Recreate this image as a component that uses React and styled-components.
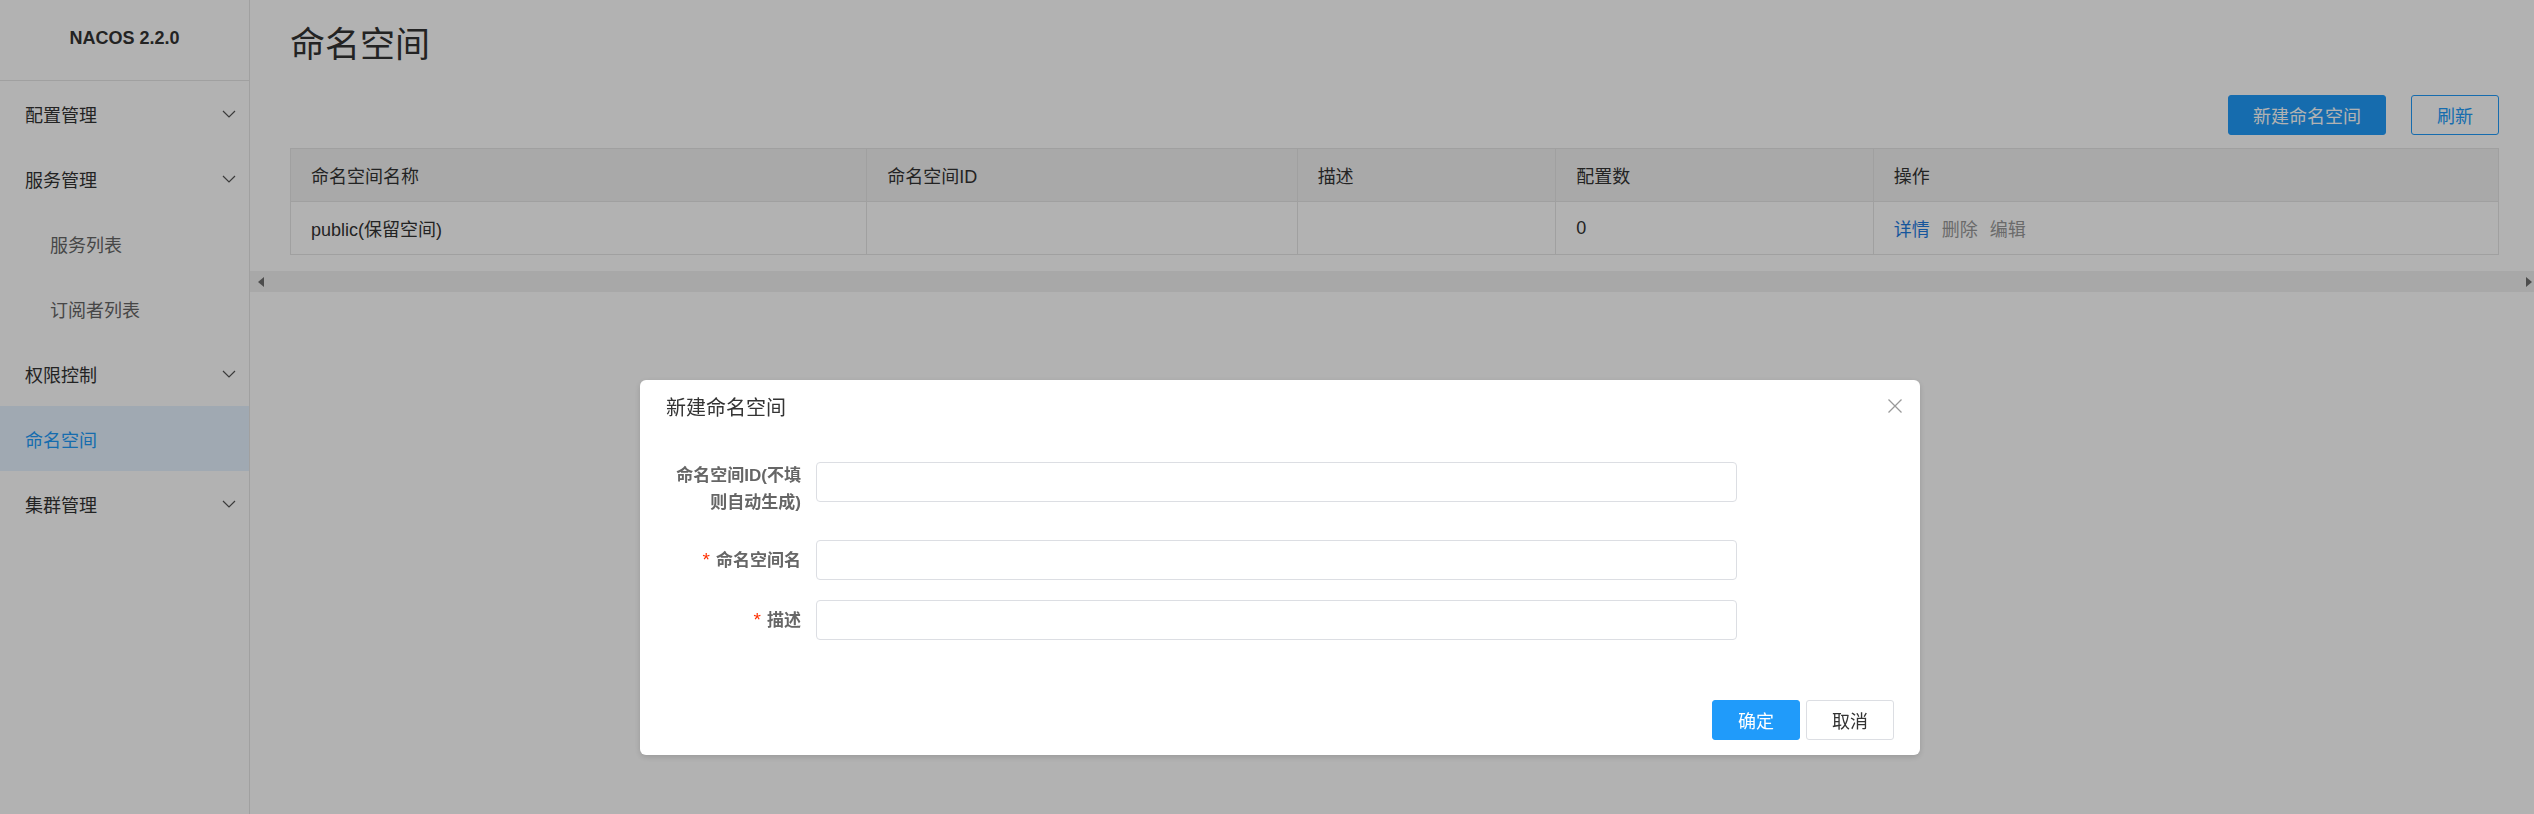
import React from 'react'
import styled, { createGlobalStyle } from 'styled-components'

const GlobalStyle = createGlobalStyle`
    html, body {
        margin: 0;
        padding: 0;
        background: #fff;
        font-family: "Liberation Sans", "Noto Sans CJK SC", sans-serif;
        color: #333;
    }
    * {
        box-sizing: border-box;
    }
`

const Page = styled.div`
    display: flex;
    width: 100vw;
    height: 100vh;
    overflow: hidden;
`

const Sidebar = styled.aside`
    width: 250px;
    flex-shrink: 0;
    border-right: 1px solid #e6e6e6;
    display: flex;
    flex-direction: column;
`

const Brand = styled.div`
    height: 81px;
    border-bottom: 1px solid #e6e6e6;
    display: flex;
    align-items: center;
    justify-content: center;
    padding-bottom: 4px;
    font-size: 18px;
    font-weight: bold;
    color: #333;
`

const MenuItem = styled.div`
    height: 65px;
    display: flex;
    align-items: center;
    justify-content: space-between;
    padding: 0 13px 0 ${p => (p.$sub ? 50 : 25)}px;
    font-size: 18px;
    color: ${p => (p.$active ? '#209bfa' : p.$sub ? '#666' : '#333')};
    background: ${p => (p.$active ? '#e5f3ff' : 'transparent')};
`

const Chevron = () => (
    <svg width="14" height="8" viewBox="0 0 14 8">
        <polyline points="1,1 7,7 13,1" fill="none" stroke="#555" strokeWidth="1.2" />
    </svg>
)

const Main = styled.main`
    flex: 1;
    display: flex;
    flex-direction: column;
    min-width: 0;
`

const Content = styled.div`
    padding: 0 35px 0 40px;
`

const Title = styled.h1`
    margin: 24px 0 0;
    font-size: 35px;
    font-weight: normal;
    line-height: 42px;
    color: #333;
`

const Toolbar = styled.div`
    display: flex;
    justify-content: flex-end;
    gap: 25px;
    margin-top: 29px;
`

const Button = styled.button`
    height: 40px;
    padding: 0 ${p => (p.$pad || 24)}px;
    border-radius: 3px;
    font-family: inherit;
    font-size: 18px;
    border: 1px solid ${p => (p.$primary ? '#209bfa' : p.$outline ? '#209bfa' : '#dcdee3')};
    background: ${p => (p.$primary ? '#209bfa' : '#fff')};
    color: ${p => (p.$primary ? '#fff' : p.$outline ? '#209bfa' : '#333')};
`

const Table = styled.div`
    margin-top: 13px;
    display: grid;
    grid-template-columns: 576fr 431fr 259fr 318fr 626fr;
    border: 1px solid #e6e6e6;
`

const HeadCell = styled.div`
    height: 53px;
    display: flex;
    align-items: center;
    padding: 0 20px;
    background: #f3f3f3;
    border-bottom: 1px solid #e6e6e6;
    border-left: ${p => (p.$first ? 'none' : '1px solid #e6e6e6')};
    font-size: 18px;
    color: #333;
`

const Cell = styled.div`
    height: 52px;
    display: flex;
    align-items: center;
    gap: 12px;
    padding: 0 20px;
    border-left: ${p => (p.$first ? 'none' : '1px solid #e6e6e6')};
    font-size: 18px;
    color: #333;
`

const Action = styled.span`
    color: ${p => (p.$disabled ? '#999' : '#1f7be0')};
`

const ScrollTrack = styled.div`
    margin-top: 16px;
    height: 21px;
    background: #f1f1f1;
    display: flex;
    align-items: center;
    justify-content: space-between;
    padding: 0 2px 0 8px;
`

const Arrow = styled.span`
    width: 0;
    height: 0;
    border-top: 5px solid transparent;
    border-bottom: 5px solid transparent;
    ${p => (p.$right ? 'border-left: 6px solid #6f6f6f;' : 'border-right: 6px solid #6f6f6f;')}
`

const Overlay = styled.div`
    position: fixed;
    inset: 0;
    background: rgba(0, 0, 0, 0.3);
`

const Dialog = styled.div`
    position: fixed;
    left: 640px;
    top: 380px;
    width: 1280px;
    background: #fff;
    border-radius: 6px;
    box-shadow: 0 2px 6px rgba(0, 0, 0, 0.15);
`

const DialogHeader = styled.div`
    padding: 14px 26px 0;
    font-size: 20px;
    line-height: 28px;
    color: #333;
`

const Close = styled.button`
    position: absolute;
    top: 18px;
    right: 17px;
    width: 16px;
    height: 16px;
    padding: 0;
    border: none;
    background: none;
    display: flex;
`

const DialogBody = styled.div`
    padding: 40px 26px 20px;
`

const FormItem = styled.div`
    display: flex;
    align-items: flex-start;
    gap: 15px;
    margin-bottom: ${p => (p.$last ? 0 : 20)}px;
`

const Label = styled.label`
    width: 135px;
    flex-shrink: 0;
    text-align: right;
    font-size: 17px;
    font-weight: bold;
    line-height: 27px;
    color: #666;
    padding: ${p => (p.$tall ? '0 0 4px' : '6px 0 0')};
`

const Required = styled.span`
    color: #ff3000;
    font-weight: normal;
    font-size: 19px;
    margin-right: 6px;
`

const Input = styled.input`
    width: 921px;
    height: 40px;
    border: 1px solid #dcdee3;
    border-radius: 4px;
    padding: 0 10px;
    font-size: 17px;
    font-family: inherit;
    outline: none;
`

const DialogFooter = styled.div`
    display: flex;
    justify-content: flex-end;
    gap: 6px;
    padding: 40px 26px 15px;
`

const menu = [
    { label: '配置管理', arrow: true },
    { label: '服务管理', arrow: true },
    { label: '服务列表', sub: true },
    { label: '订阅者列表', sub: true },
    { label: '权限控制', arrow: true },
    { label: '命名空间', active: true },
    { label: '集群管理', arrow: true },
]

const columns = ['命名空间名称', '命名空间ID', '描述', '配置数', '操作']

const App = () => {
    return (
        <Page>
            <GlobalStyle />
            <Sidebar>
                <Brand>NACOS 2.2.0</Brand>
                {menu.map(m => (
                    <MenuItem key={m.label} $sub={m.sub} $active={m.active}>
                        {m.label}
                        {m.arrow && <Chevron />}
                    </MenuItem>
                ))}
            </Sidebar>
            <Main>
                <Content>
                    <Title>命名空间</Title>
                    <Toolbar>
                        <Button $primary>新建命名空间</Button>
                        <Button $outline $pad={25}>刷新</Button>
                    </Toolbar>
                    <Table>
                        {columns.map((c, i) => (
                            <HeadCell key={c} $first={i === 0}>{c}</HeadCell>
                        ))}
                        <Cell $first>public(保留空间)</Cell>
                        <Cell />
                        <Cell />
                        <Cell>0</Cell>
                        <Cell>
                            <Action>详情</Action>
                            <Action $disabled>删除</Action>
                            <Action $disabled>编辑</Action>
                        </Cell>
                    </Table>
                </Content>
                <ScrollTrack>
                    <Arrow />
                    <Arrow $right />
                </ScrollTrack>
            </Main>
            <Overlay />
            <Dialog>
                <DialogHeader>新建命名空间</DialogHeader>
                <Close aria-label="close">
                    <svg width="16" height="16" viewBox="0 0 16 16">
                        <path d="M1.5 1.5 L14.5 14.5 M14.5 1.5 L1.5 14.5" stroke="#999" strokeWidth="1.3" />
                    </svg>
                </Close>
                <DialogBody>
                    <FormItem>
                        <Label $tall>命名空间ID(不填则自动生成)</Label>
                        <Input />
                    </FormItem>
                    <FormItem>
                        <Label><Required>*</Required>命名空间名</Label>
                        <Input />
                    </FormItem>
                    <FormItem $last>
                        <Label><Required>*</Required>描述</Label>
                        <Input />
                    </FormItem>
                </DialogBody>
                <DialogFooter>
                    <Button $primary $pad={25}>确定</Button>
                    <Button $pad={25}>取消</Button>
                </DialogFooter>
            </Dialog>
        </Page>
    )
}

export default App
